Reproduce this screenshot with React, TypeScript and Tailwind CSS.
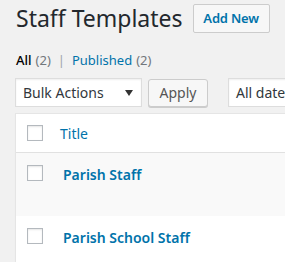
import React from "react";

const font = { fontFamily: '"Noto Sans", "Open Sans", sans-serif' };

function Check() {
  return (
    <span className="block w-[16px] h-[16px] border border-[#b4b9be] bg-white shadow-[inset_0_1px_2px_rgba(0,0,0,0.1)] shrink-0" />
  );
}

export default function App() {
  return (
    <div
      className="w-[285px] h-[262px] overflow-hidden bg-[#f1f1f1] text-[#444]"
      style={font}
    >
      <div className="pl-[15px] w-[700px]">
        <div className="flex items-center h-[37px]">
          <h1 className="text-[23px] leading-[29px] font-normal text-[#23282d] pl-px">
            Staff Templates
          </h1>
          <button className="ml-[10px] h-[29px] w-[77px] rounded-[2px] border border-[#ccc] bg-[#f7f7f7] text-[13px] font-semibold text-[#0073aa] leading-[27px] tracking-[-0.2px]">
            Add New
          </button>
        </div>
        <div className="mt-[13px] h-[20px] flex items-center text-[13px] leading-[20px] pl-px">
          <span className="text-black font-medium">All</span>
          <span className="text-[#72777c] ml-[4px]">(2)</span>
          <span className="text-[#a0a5aa] mx-[7px]">|</span>
          <span className="text-[#0073aa]">Published</span>
          <span className="text-[#72777c] ml-[4px]">(2)</span>
        </div>
        <div className="mt-[8px] flex items-start h-[30px]">
          <div className="h-[29px] w-[127px] border border-[#ddd] bg-white shadow-[inset_0_1px_2px_rgba(0,0,0,0.07)] flex items-center justify-between pl-[7px] pr-[8px] text-[14px] text-[#32373c]">
            <span>Bulk Actions</span>
            <svg width="8" height="6" viewBox="0 0 8 6">
              <path d="M0 0h8L4 6z" fill="#333" />
            </svg>
          </div>
          <button className="ml-[6px] mt-px h-[28px] w-[60px] rounded-[3px] border border-[#ccc] bg-[#f7f7f7] shadow-[0_1px_0_#ccc] text-[14px] text-[#555] leading-[26px]">
            Apply
          </button>
          <div className="ml-[20px] h-[29px] w-[150px] border border-[#ddd] bg-white shadow-[inset_0_1px_2px_rgba(0,0,0,0.07)] flex items-center pl-[7px] text-[14px] text-[#32373c]">
            <span>All dates</span>
          </div>
        </div>
        <div className="mt-[5px] border border-[#e5e5e5] bg-white shadow-[0_1px_1px_rgba(0,0,0,0.04)]">
          <div className="h-[39px] border-b border-[#e1e1e1] flex items-center pl-[11px]">
            <Check />
            <span className="ml-[17px] text-[14px] text-[#0073aa]">Title</span>
          </div>
          <div className="h-[63px] bg-[#f9f9f9] flex items-start pl-[11px] pt-[12px]">
            <Check />
            <span className="ml-[20px] -mt-[1px] text-[14px] font-semibold text-[#0073aa]">
              Parish Staff
            </span>
          </div>
          <div className="h-[63px] flex items-start pl-[11px] pt-[12px]">
            <Check />
            <span className="ml-[20px] -mt-[1px] text-[14px] font-semibold text-[#0073aa]">
              Parish School Staff
            </span>
          </div>
        </div>
      </div>
    </div>
  );
}
